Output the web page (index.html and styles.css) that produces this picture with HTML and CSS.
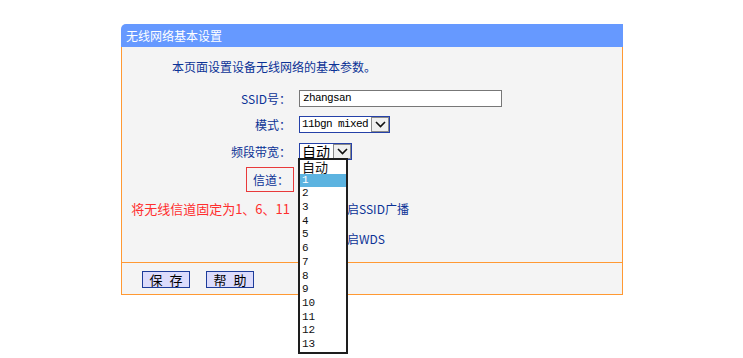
FILE: index.html
```html
<!DOCTYPE html>
<html lang="zh-CN">
<head>
    <meta charset="UTF-8">
    <title>无线网络基本设置</title>
    <link rel="stylesheet" href="styles.css">
</head>
<body>
    <div class="panel">
        <div class="panel-title">无线网络基本设置</div>
        <div class="panel-body">
            <p class="intro">本页面设置设备无线网络的基本参数。</p>
            <div class="form-grid">
                <label class="lbl row-a" for="ssid">SSID号：</label>
                <div class="val row-a"><input class="txt" id="ssid" type="text" value="zhangsan"></div>

                <label class="lbl row-a">模式：</label>
                <div class="val row-a">
                    <span class="sel sel-mode">
                        <select><option>11bgn mixed</option></select>
                        <span class="arrow"><svg width="11" height="7" viewBox="0 0 11 7"><path d="M1 1 L5.5 5.5 L10 1" fill="none" stroke="#111" stroke-width="1.6"/></svg></span>
                    </span>
                </div>

                <label class="lbl row-b">频段带宽：</label>
                <div class="val row-b">
                    <span class="sel sel-band">
                        <select><option>自动</option></select>
                        <span class="arrow"><svg width="11" height="7" viewBox="0 0 11 7"><path d="M1 1 L5.5 5.5 L10 1" fill="none" stroke="#111" stroke-width="1.6"/></svg></span>
                    </span>
                </div>

                <div class="lbl row-b lbl-boxed"><span class="red-box">信道：</span></div>
                <div class="val row-b channel">
                    <span class="sel sel-channel">
                        <select><option>1</option></select>
                        <span class="arrow"><svg width="11" height="7" viewBox="0 0 11 7"><path d="M1 1 L5.5 5.5 L10 1" fill="none" stroke="#111" stroke-width="1.6"/></svg></span>
                    </span>
                    <ul class="drop-list">
                        <li class="cjk">自动</li>
                        <li class="active">1</li>
                        <li>2</li>
                        <li>3</li>
                        <li>4</li>
                        <li>5</li>
                        <li>6</li>
                        <li>7</li>
                        <li>8</li>
                        <li>9</li>
                        <li>10</li>
                        <li>11</li>
                        <li>12</li>
                        <li>13</li>
                    </ul>
                </div>

                <div class="lbl row-c warn">将无线信道固定为1、6、11</div>
                <div class="val row-c"><label class="chk"><input type="checkbox" checked>开启SSID广播</label></div>

                <div class="lbl row-c"></div>
                <div class="val row-c"><label class="chk"><input type="checkbox">开启WDS</label></div>
            </div>
        </div>
        <div class="panel-foot">
            <button type="button" class="btn">保 存</button>
            <button type="button" class="btn">帮 助</button>
        </div>
    </div>
</body>
</html>
```

FILE: styles.css
```css
:root {
    --title-blue: #6699ff;
    --frame-orange: #ff9933;
    --body-bg: #f4f4f4;
    --text-blue: #0b3296;
    --warn-red: #ff2e2e;
}

* {
    box-sizing: border-box;
    margin: 0;
    padding: 0;
}

html {
    height: 100%;
}

body {
    min-height: 100%;
    background: #fff;
    font-family: "Noto Sans CJK SC", "Liberation Sans", sans-serif;
    font-size: 12px;
    color: var(--text-blue);
}

.panel {
    width: 502px;
    margin: 24px 0 0 121px;
}

.panel-title {
    height: 23px;
    line-height: 23px;
    padding-left: 5px;
    background: var(--title-blue);
    color: #fff;
    border-top-left-radius: 5px;
}

.panel-body {
    background: var(--body-bg);
    border-left: 1px solid var(--frame-orange);
    border-right: 1px solid var(--frame-orange);
    padding: 12px 0 9px;
}

.intro {
    height: 16px;
    line-height: 16px;
    padding-left: 50px;
}

.form-grid {
    display: grid;
    grid-template-columns: 174px 1fr;
    column-gap: 3px;
    margin-top: 10px;
}

.lbl {
    display: flex;
    align-items: center;
    justify-content: flex-end;
    padding-right: 5px;
}

.val {
    display: flex;
    align-items: center;
}

.row-a { height: 26px; }
.row-b { height: 28px; }
.row-c { height: 30px; }

.txt {
    width: 203px;
    height: 17px;
    border: 1px solid #777;
    background: #fff;
    padding: 0 3px;
    font-family: "Liberation Mono", monospace;
    font-size: 11px;
    letter-spacing: -0.6px;
    color: #000;
    outline: none;
}

.sel {
    display: inline-flex;
    height: 17px;
    border: 1px solid #2541a8;
    background: #fff;
}

.sel select {
    appearance: none;
    -webkit-appearance: none;
    border: none;
    background: transparent;
    padding: 0 2px;
    color: #000;
    outline: none;
}

.sel-mode select {
    width: 71px;
    font-family: "Liberation Mono", monospace;
    font-size: 11px;
    letter-spacing: -0.6px;
}

.sel-band select {
    width: 33px;
    font-family: "Noto Sans CJK SC", sans-serif;
    font-size: 14px;
    line-height: 15px;
}

.sel-channel select {
    width: 24px;
    font-family: "Liberation Mono", monospace;
    font-size: 11px;
}

.arrow {
    width: 18px;
    display: flex;
    align-items: center;
    justify-content: center;
    background: #f0f0f0;
    border: 1px solid #8a8a8a;
}

.lbl-boxed {
    padding-right: 2px;
}

.red-box {
    display: flex;
    align-items: center;
    height: 25px;
    padding: 0 4px 0 6px;
    border: 1px solid #e8393a;
}

.channel {
    position: relative;
}

.drop-list {
    position: absolute;
    top: -7px;
    left: -1px;
    width: 50px;
    height: 196px;
    list-style: none;
    background: #fff;
    border: 2px solid #1e1e1e;
    z-index: 5;
}

.drop-list li {
    height: 13.7px;
    line-height: 13.7px;
    padding-left: 2px;
    font-family: "Liberation Mono", monospace;
    font-size: 11px;
    color: #111;
}

.drop-list li.cjk {
    font-family: "Noto Sans CJK SC", sans-serif;
    font-size: 13px;
}

.drop-list li.active {
    background: #5cb3e0;
    color: #fff;
}

.warn {
    color: var(--warn-red);
    font-size: 13px;
    padding-right: 6px;
}

.chk {
    display: flex;
    align-items: center;
    padding-left: 21px;
}

.chk input {
    width: 13px;
    height: 13px;
    margin-right: 2px;
}

.panel-foot {
    display: flex;
    gap: 16px;
    height: 33px;
    padding: 8px 0 0 20px;
    background: var(--body-bg);
    border: 1px solid var(--frame-orange);
}

.btn {
    width: 48px;
    height: 17px;
    background: #dcdcfc;
    border: 1px solid #1d3c9a;
    color: #000;
    font-family: "Noto Sans CJK SC", sans-serif;
    font-size: 13px;
    line-height: 15px;
    word-spacing: 4px;
}
```
